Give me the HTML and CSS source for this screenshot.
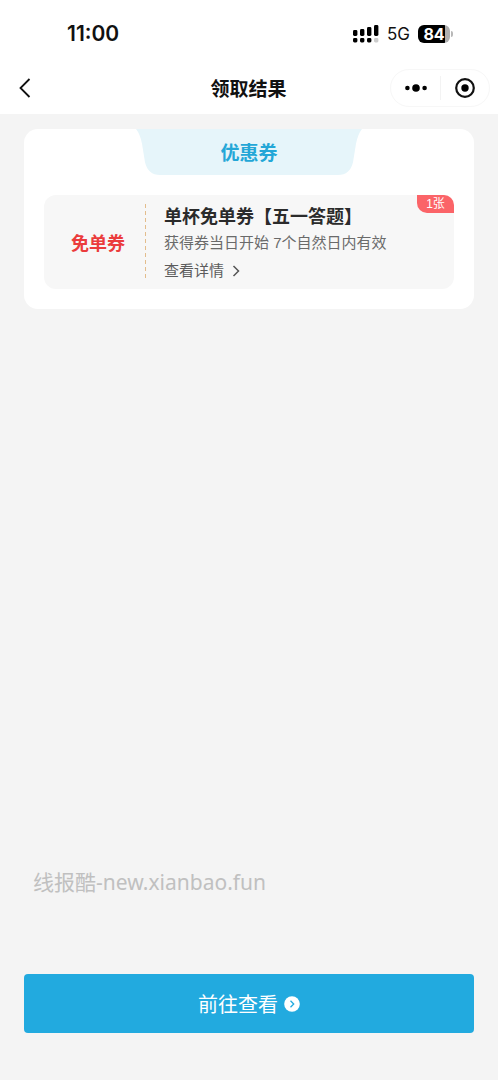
FILE: index.html
```html
<!DOCTYPE html>
<html lang="zh-CN">
<head>
<meta charset="utf-8">
<meta name="viewport" content="width=device-width, initial-scale=1">
<title>领取结果</title>
<link rel="stylesheet" href="styles.css">
</head>
<body>
<div class="page">
  <header class="top">
    <div class="status">
      <time class="clock">11:00</time>
      <div class="indicators">
        <svg class="signal" width="26" height="18" viewBox="0 0 26 18" aria-hidden="true">
          <rect x="0" y="5" width="4.4" height="6" rx="1.4"/>
          <rect x="7" y="4" width="4.4" height="7" rx="1.4"/>
          <rect x="14" y="2" width="4.4" height="9" rx="1.4"/>
          <rect x="21" y="0" width="4.4" height="11" rx="1.4"/>
          <rect x="0" y="13" width="4.4" height="4.4" rx="1.4"/>
          <rect x="7" y="13" width="4.4" height="4.4" rx="1.4"/>
          <rect x="14" y="13" width="4.4" height="4.4" rx="1.4"/>
          <rect x="21" y="13" width="4.4" height="4.4" rx="1.4" fill="#cccccc"/>
        </svg>
        <span class="network">5G</span>
        <span class="battery"><span class="level">84</span></span>
      </div>
    </div>
    <nav class="nav">
      <button class="back" type="button" aria-label="返回">
        <svg width="12" height="20" viewBox="0 0 12 20" aria-hidden="true"><path d="M10.500 1 1.500 10l9 9" fill="none" stroke="#111" stroke-width="1.800"/></svg>
      </button>
      <h1 class="title">领取结果</h1>
      <div class="capsule">
        <button type="button" aria-label="更多">
          <svg width="22" height="8" viewBox="0 0 22 8" aria-hidden="true"><circle cx="2.400" cy="4" r="2.300"/><circle cx="11" cy="4" r="3.800"/><circle cx="19.600" cy="4" r="2.300"/></svg>
        </button>
        <button type="button" aria-label="关闭">
          <svg width="20" height="20" viewBox="0 0 20 20" aria-hidden="true"><circle cx="10" cy="10" r="8.800" fill="none" stroke="#111" stroke-width="2.200"/><circle cx="10" cy="10" r="3.700"/></svg>
        </button>
      </div>
    </nav>
  </header>

  <main class="content">
    <section class="card">
      <div class="ribbon">
        <svg class="ribbon-shape" viewBox="0 0 226 47" preserveAspectRatio="none" aria-hidden="true"><path d="M0 0H226Q222 5 220 15L217 34Q214 47 202 47H24Q12 47 9 34L6 15Q4 5 0 0Z" fill="#e6f5fa"/></svg>
        <h2 class="ribbon-text">优惠券</h2>
      </div>
      <article class="coupon">
        <strong class="kind">免单券</strong>
        <svg class="divider" width="2" height="76" aria-hidden="true"><path d="M1.500 0V76" stroke="#e3bd8d" stroke-width="1" stroke-dasharray="4 3"/></svg>
        <div class="info">
          <h3 class="name">单杯免单券【五一答题】</h3>
          <p class="valid">获得券当日开始 7个自然日内有效</p>
          <button class="detail" type="button">查看详情
            <svg width="8" height="12" viewBox="0 0 8 12" aria-hidden="true"><path d="M1.500 1 6.500 6l-5 5" fill="none" stroke="#555" stroke-width="1.500"/></svg>
          </button>
        </div>
        <span class="count">1张</span>
      </article>
    </section>
    <p class="watermark">线报酷-new.xianbao.fun</p>
    <button class="go" type="button">前往查看
      <svg width="16" height="16" viewBox="0 0 16 16" aria-hidden="true"><circle cx="8" cy="8" r="7.800" fill="#fff"/><path d="M6.500 4.800 9.700 8l-3.200 3.200" fill="none" stroke="#22aadf" stroke-width="1.300"/></svg>
    </button>
  </main>
</div>
</body>
</html>
```
FILE: styles.css
```css
* {
  box-sizing: border-box;
}

body {
  margin: 0;
  background: #f4f4f4;
  color: #111;
  font-family: "Liberation Sans", "Noto Sans CJK SC", sans-serif;
}

h1, h2, h3, p {
  margin: 0;
}

button {
  display: flex;
  align-items: center;
  justify-content: center;
  padding: 0;
  border: 0;
  background: none;
  color: inherit;
  font: inherit;
}

.page {
  display: flex;
  flex-direction: column;
  min-height: 100vh;
}

.top {
  background: #fff;
}

.status {
  display: flex;
  align-items: center;
  justify-content: space-between;
  padding: 22px 48px 16px 67px;
  font-family: Inter, sans-serif;
  line-height: 24px;
}

.clock {
  font-size: 21px;
  font-weight: 600;
}

.indicators {
  display: flex;
  align-items: center;
  gap: 8px;
}

.network {
  font-size: 17px;
}

.battery {
  position: relative;
  width: 32px;
  height: 18px;
  border-radius: 6px;
  background: linear-gradient(to right, #000 84%, #b0b0b0 84%);
  color: #fff;
  font-size: 16px;
  font-weight: 700;
  line-height: 18px;
  text-align: center;
}

.battery::after {
  content: "";
  position: absolute;
  top: 6px;
  right: -3px;
  width: 2px;
  height: 6px;
  border-radius: 0 2px 2px 0;
  background: #b8b8b8;
}

.nav {
  display: grid;
  grid-template-columns: 1fr auto 1fr;
  align-items: center;
  padding: 7px 8px 7px 19px;
}

.back {
  width: 12px;
  height: 38px;
}

.title {
  padding: 4px 12px 0 0;
  font-size: 19px;
  font-weight: 700;
  line-height: 28px;
}

.capsule {
  display: grid;
  grid-template-columns: 1fr 1fr;
  justify-self: end;
  width: 100px;
  height: 38px;
  border: 1px solid #f7f7f7;
  border-radius: 19px;
}

.capsule button + button {
  background: linear-gradient(#f3f3f3, #f3f3f3) left center / 1px 24px no-repeat;
}

.content {
  display: flex;
  flex: 1;
  flex-direction: column;
  padding: 15px 24px 47px;
}

.card {
  padding: 0 20px 20px;
  border-radius: 14px;
  background: #fff;
}

.ribbon {
  display: grid;
  width: 226px;
  margin: 0 auto 20px;
}

.ribbon-shape,
.ribbon-text {
  grid-area: 1 / 1;
}

.ribbon-shape {
  width: 100%;
  height: 46px;
}

.ribbon-text {
  padding-top: 4px;
  color: #24a7d7;
  font-size: 19px;
  line-height: 42px;
  text-align: center;
}

.coupon {
  position: relative;
  display: flex;
  align-items: center;
  min-height: 94px;
  border-radius: 12px;
  background: #f7f7f7;
}

.kind {
  width: 100px;
  padding-left: 8px;
  color: #eb3c3c;
  font-size: 18px;
  text-align: center;
}

.info {
  padding: 6px 0 0 18px;
}

.name {
  color: #2b2b2b;
  font-size: 18px;
  line-height: 26px;
}

.valid {
  color: #6a6a6a;
  font-size: 15px;
  line-height: 26px;
}

.detail {
  gap: 8px;
  color: #5c5c5c;
  font-size: 15px;
  line-height: 30px;
}

.count {
  position: absolute;
  top: 0;
  right: 0;
  width: 37px;
  border-radius: 0 10px 0 10px;
  background: #fb6468;
  color: #fff;
  font-size: 12px;
  line-height: 18px;
  text-align: center;
}

.watermark {
  margin-top: auto;
  padding: 0 9px 78px;
  color: #c0c0c0;
  font-family: "Noto Sans", "Noto Sans CJK SC", sans-serif;
  font-size: 21px;
  line-height: 28px;
}

.go {
  gap: 6px;
  width: 100%;
  min-height: 59px;
  border-radius: 4px;
  background: #22aadf;
  color: #fff;
  font-size: 20px;
}
```
